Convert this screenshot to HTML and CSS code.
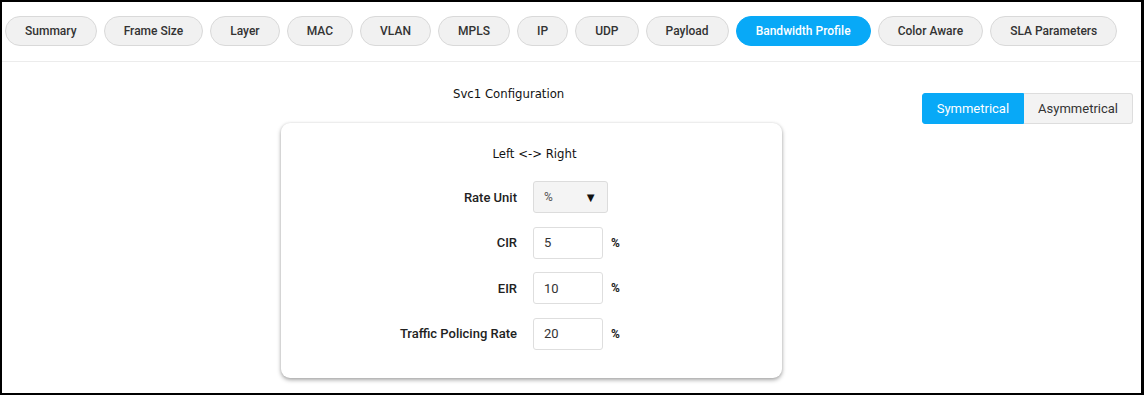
FILE: index.html
```html
<!DOCTYPE html>
<html lang="en">
  <head>
    <meta charset="UTF-8" />
    <link rel="stylesheet" href="styles.css">
  </head>
  <body>
    <div class="frame">
      <div class="tabs">
        <button class="tab">Summary</button>
        <button class="tab">Frame Size</button>
        <button class="tab">Layer</button>
        <button class="tab">MAC</button>
        <button class="tab">VLAN</button>
        <button class="tab">MPLS</button>
        <button class="tab">IP</button>
        <button class="tab">UDP</button>
        <button class="tab">Payload</button>
        <button class="tab active">Bandwidth Profile</button>
        <button class="tab">Color Aware</button>
        <button class="tab">SLA Parameters</button>
      </div>

      <div class="content">
        <div class="main">
          <div class="section-title">Svc1 Configuration</div>
          <div class="card">
            <div class="card-title">Left &lt;-&gt; Right</div>
            <div class="form">
              <label class="label">Rate Unit</label>
              <div class="select">
                <span>%</span>
                <span class="arrow">&#9660;</span>
              </div>
              <span></span>

              <label class="label">CIR</label>
              <input class="input" type="text" value="5" />
              <span class="unit">%</span>

              <label class="label">EIR</label>
              <input class="input" type="text" value="10" />
              <span class="unit">%</span>

              <label class="label">Traffic Policing Rate</label>
              <input class="input" type="text" value="20" />
              <span class="unit">%</span>
            </div>
          </div>
        </div>

        <div class="toggle">
          <button class="toggle-button on">Symmetrical</button>
          <button class="toggle-button">Asymmetrical</button>
        </div>
      </div>
    </div>
  </body>
</html>
```

FILE: styles.css
```css
html,
body {
  margin: 0;
  background: #fff;
}

body {
  font-family: Roboto, "Liberation Sans", sans-serif;
  color: #333;
}

.frame {
  width: 1144px;
  height: 395px;
  box-sizing: border-box;
  border: 2px solid #000;
  border-right-width: 3px;
  overflow: hidden;
}

.tabs {
  display: flex;
  gap: 7.1px;
  padding: 14px 3px 15px;
  border-bottom: 1px solid #ececec;
}

.tab {
  height: 30px;
  padding: 0 19px;
  border: 1px solid #d9d9d9;
  border-radius: 15px;
  background: #f1f1f1;
  color: #333;
  font-family: Roboto, sans-serif;
  font-size: 12px;
  font-weight: 500;
  cursor: pointer;
  white-space: nowrap;
}

.tab.active {
  background: #08a9f7;
  border-color: #08a9f7;
  color: #fff;
}

.content {
  display: flex;
  align-items: flex-start;
  padding-right: 8px;
}

.main {
  flex: 1;
}

.section-title {
  margin: 24px 0 0 451px;
  font-family: "DejaVu Sans Condensed", "Liberation Sans Narrow", sans-serif;
  font-stretch: condensed;
  font-size: 13px;
  line-height: 16px;
  color: #111;
}

.card {
  width: 501px;
  margin: 21px 0 0 279px;
  box-sizing: border-box;
  padding: 22px 0 28px;
  background: #fff;
  border-radius: 9px;
  box-shadow: 0 2px 4px rgba(0, 0, 0, 0.35), 0 0 3px rgba(0, 0, 0, 0.08);
}

.card-title {
  text-align: center;
  padding-left: 6px;
  font-family: "DejaVu Sans Condensed", "Liberation Sans Narrow", sans-serif;
  font-stretch: condensed;
  font-size: 13px;
  line-height: 18px;
  color: #111;
}

.form {
  display: grid;
  grid-template-columns: 236px 75px auto;
  column-gap: 16px;
  row-gap: 13.5px;
  align-items: center;
  margin-top: 18px;
}

.label {
  text-align: right;
  font-size: 13px;
  font-weight: 500;
  color: #222;
}

.select {
  height: 32px;
  box-sizing: border-box;
  display: flex;
  align-items: center;
  justify-content: space-between;
  padding: 0 10px;
  border: 1px solid #dcdcdc;
  border-radius: 3px;
  background: #f4f4f4;
  font-size: 12px;
  color: #555;
}

.arrow {
  font-size: 13px;
  color: #111;
}

.input {
  width: 70px;
  height: 32px;
  box-sizing: border-box;
  padding: 0 10px;
  border: 1px solid #dedede;
  border-radius: 3px;
  font-family: Roboto, sans-serif;
  font-size: 13px;
  color: #333;
}

.unit {
  margin-left: -13px;
  font-size: 12px;
  font-weight: 700;
  color: #222;
}

.toggle {
  display: flex;
  margin-top: 31px;
}

.toggle-button {
  height: 31px;
  padding: 0 14px;
  border: 1px solid #ddd;
  background: #f3f3f3;
  color: #333;
  font-family: Roboto, sans-serif;
  font-size: 13px;
  cursor: pointer;
}

.toggle-button:first-child {
  border-radius: 3px 0 0 3px;
}

.toggle-button:last-child {
  border-left: none;
  border-radius: 0 3px 3px 0;
}

.toggle-button.on {
  background: #08a9f7;
  border-color: #08a9f7;
  color: #fff;
}
```
